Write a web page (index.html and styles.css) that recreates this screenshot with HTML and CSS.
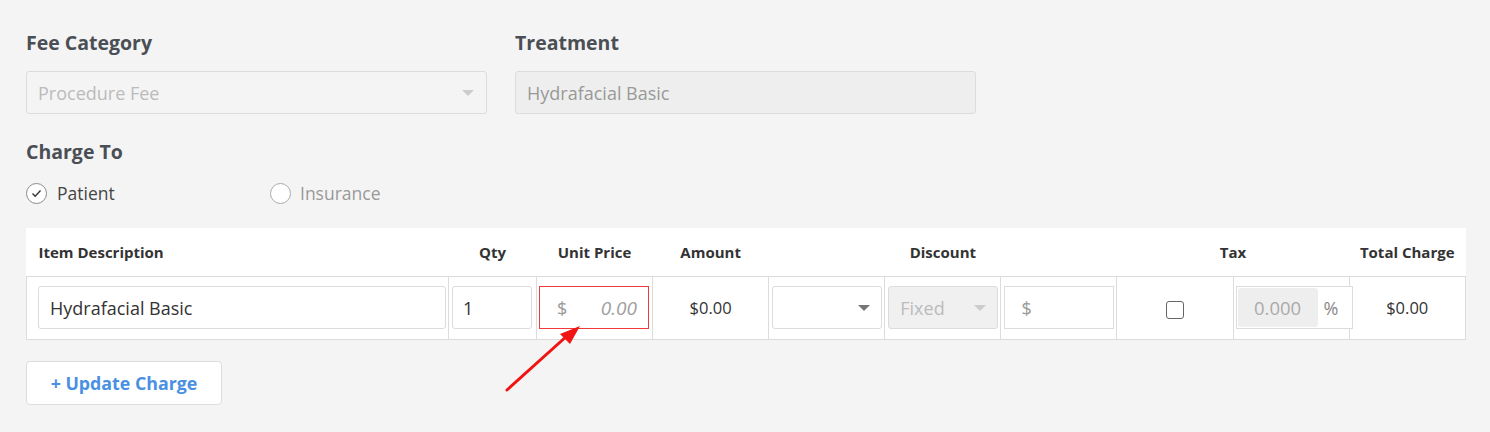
FILE: index.html
```html
<!DOCTYPE html>
<html>
<head>
<meta charset="utf-8">
<link rel="stylesheet" href="styles.css">
</head>
<body>
<div class="page">
  <div class="top-row">
    <div class="field">
      <div class="label">Fee Category</div>
      <div class="select disabled">
        <span>Procedure Fee</span>
        <span class="caret"></span>
      </div>
    </div>
    <div class="field">
      <div class="label">Treatment</div>
      <div class="textbox readonly">Hydrafacial Basic</div>
    </div>
  </div>

  <div class="label charge-label">Charge To</div>
  <div class="radios">
    <div class="radio checked">
      <span class="circle"><svg width="11" height="9" viewBox="0 0 11 9"><path d="M1.5 4.6 L4.2 7.2 L9.5 1.6" fill="none" stroke="#333" stroke-width="1.4"/></svg></span>
      <span class="rtext">Patient</span>
    </div>
    <div class="radio off">
      <span class="circle"></span>
      <span class="rtext">Insurance</span>
    </div>
  </div>

  <table class="charges">
    <colgroup>
      <col class="c-desc"><col class="c-qty"><col class="c-std"><col class="c-std"><col class="c-std"><col class="c-std"><col class="c-std"><col class="c-std"><col class="c-std"><col class="c-std">
    </colgroup>
    <thead>
      <tr>
        <th class="left">Item Description</th>
        <th>Qty</th>
        <th>Unit Price</th>
        <th>Amount</th>
        <th colspan="3">Discount</th>
        <th colspan="2">Tax</th>
        <th>Total Charge</th>
      </tr>
    </thead>
    <tbody>
      <tr>
        <td class="pad-desc"><div class="box desc">Hydrafacial Basic</div></td>
        <td class="pad-qty"><div class="box qty">1</div></td>
        <td class="pad-unit"><div class="box unit error"><span class="dollar">$</span><span class="ph">0.00</span></div></td>
        <td class="val">$0.00</td>
        <td class="pad-sel"><div class="box sel"><span></span><span class="caret"></span></div></td>
        <td class="pad-sel"><div class="box sel dis"><span>Fixed</span><span class="caret light"></span></div></td>
        <td class="pad-sel"><div class="box sel dollarbox"><span class="dollar">$</span></div></td>
        <td class="val"><span class="checkbox"></span></td>
        <td class="pad-tax"><div class="box tax"><span class="taxval">0.000</span><span class="pct">%</span></div></td>
        <td class="val">$0.00</td>
      </tr>
    </tbody>
  </table>

  <button class="update">+ Update Charge</button>
</div>
<svg class="arrow" width="100" height="90" viewBox="0 0 100 90">
  <line x1="7" y1="70" x2="68" y2="15" stroke="#f01414" stroke-width="3" stroke-linecap="round"/>
  <polygon points="80,6 60,14 70,24" fill="#f01414"/>
</svg>
</body>
</html>
```

FILE: styles.css
```css
* { box-sizing: border-box; }
html, body { margin: 0; padding: 0; }
body {
  background: #f4f4f4;
  font-family: "Open Sans", "Liberation Sans", sans-serif;
  color: #444;
  width: 1490px;
  height: 432px;
  position: relative;
  overflow: hidden;
}
.page { padding: 31px 25px 0 26px; }
.top-row { display: flex; gap: 28px; }
.field { width: 461px; }
.label {
  font-size: 19.5px;
  font-weight: 700;
  color: #4a4f55;
  line-height: 24px;
  height: 24px;
}
.top-row .label { margin-bottom: 16px; }
.select, .textbox {
  height: 43px;
  border: 1px solid #dcdcdc;
  border-radius: 3px;
  display: flex;
  align-items: center;
  font-size: 18px;
  padding: 0 12px 0 11px;
}
.select { justify-content: space-between; background: #f4f4f4; color: #bbb; }
.textbox.readonly { background: #eeeeee; color: #999; }
.caret {
  width: 0; height: 0;
  border-left: 6px solid transparent;
  border-right: 6px solid transparent;
  border-top: 6px solid #ccc;
}
.charge-label { margin-top: 26px; }
.radios { display: flex; margin-top: 17px; height: 24px; align-items: center; }
.radio { display: flex; align-items: center; }
.radio.checked { width: 244px; }
.circle {
  width: 21px; height: 21px;
  border: 1px solid #8a8a8a;
  border-radius: 50%;
  background: #fff;
  display: flex; align-items: center; justify-content: center;
  margin-right: 10px;
}
.radio.off .circle { border-color: #aaa; margin-right: 9px; }
.rtext { font-size: 17.5px; color: #444; }
.radio.off .rtext { color: #999; }

table.charges {
  margin-top: 23px;
  width: 1439px;
  border-collapse: collapse;
  table-layout: fixed;
  background: #fff;
}
col.c-desc { width: 422px; }
col.c-qty { width: 88px; }
col.c-std { width: 116.1px; }
.charges th {
  height: 48px;
  font-size: 15px;
  font-weight: 700;
  color: #333;
  text-align: center;
  border-bottom: 1px solid #dcdcdc;
  padding: 0;
}
.charges th.left { text-align: left; padding-left: 12px; }
.charges td {
  height: 63px;
  border: 1px solid #dcdcdc;
  padding: 0;
  vertical-align: middle;
}
.charges td.val { text-align: center; font-size: 16.5px; color: #333; }
.box {
  height: 43px;
  border: 1px solid #dcdcdc;
  border-radius: 3px;
  display: flex;
  align-items: center;
  font-size: 18px;
  background: #fff;
}
.pad-desc { padding-left: 11px !important; }
.box.desc { width: 408px; padding-left: 11px; color: #333; }
.pad-qty { padding-left: 3px !important; }
.box.qty { width: 80px; padding-left: 10px; color: #333; }
.pad-unit { padding-left: 2px !important; }
.box.unit { width: 110px; border-radius: 0; justify-content: space-between; padding: 0 11px 0 17px; }
.box.unit.error { border-color: #f03a3a; }
.dollar { color: #999; font-size: 18px; }
.ph { color: #a0a0a0; font-style: italic; font-size: 19px; }
.pad-sel { padding-left: 3px !important; }
.box.sel { width: 110px; justify-content: space-between; padding: 0 11px 0 11px; }
.box.sel .caret { border-top-color: #777; }
.box.sel.dis { background: #f0f0f0; color: #bbb; }
.box.sel.dis .caret.light { border-top-color: #ccc; }
.box.dollarbox { border-radius: 0; justify-content: flex-start; padding-left: 16px; }
.checkbox {
  display: inline-block;
  width: 18px; height: 18px;
  border: 1px solid #666;
  border-radius: 3px;
  vertical-align: middle;
}
.pad-tax { padding-left: 2px !important; }
.box.tax { width: 117px; border-radius: 0; padding: 1px; position: relative; z-index: 1; }
.taxval {
  background: #eeeeee;
  height: 100%;
  width: 80px;
  border-radius: 3px;
  display: flex; align-items: center; justify-content: center;
  color: #aaa;
  font-size: 18.5px;
}
.pct { color: #888; font-size: 18px; margin-left: 6px; }

.update {
  margin-top: 21px;
  width: 196px;
  height: 44px;
  background: #fff;
  border: 1px solid #dcdcdc;
  border-radius: 4px;
  color: #4a90e2;
  font-family: inherit;
  font-size: 17.8px;
  font-weight: 700;
  cursor: pointer;
}
.arrow { position: absolute; left: 500px; top: 320px; }
```
